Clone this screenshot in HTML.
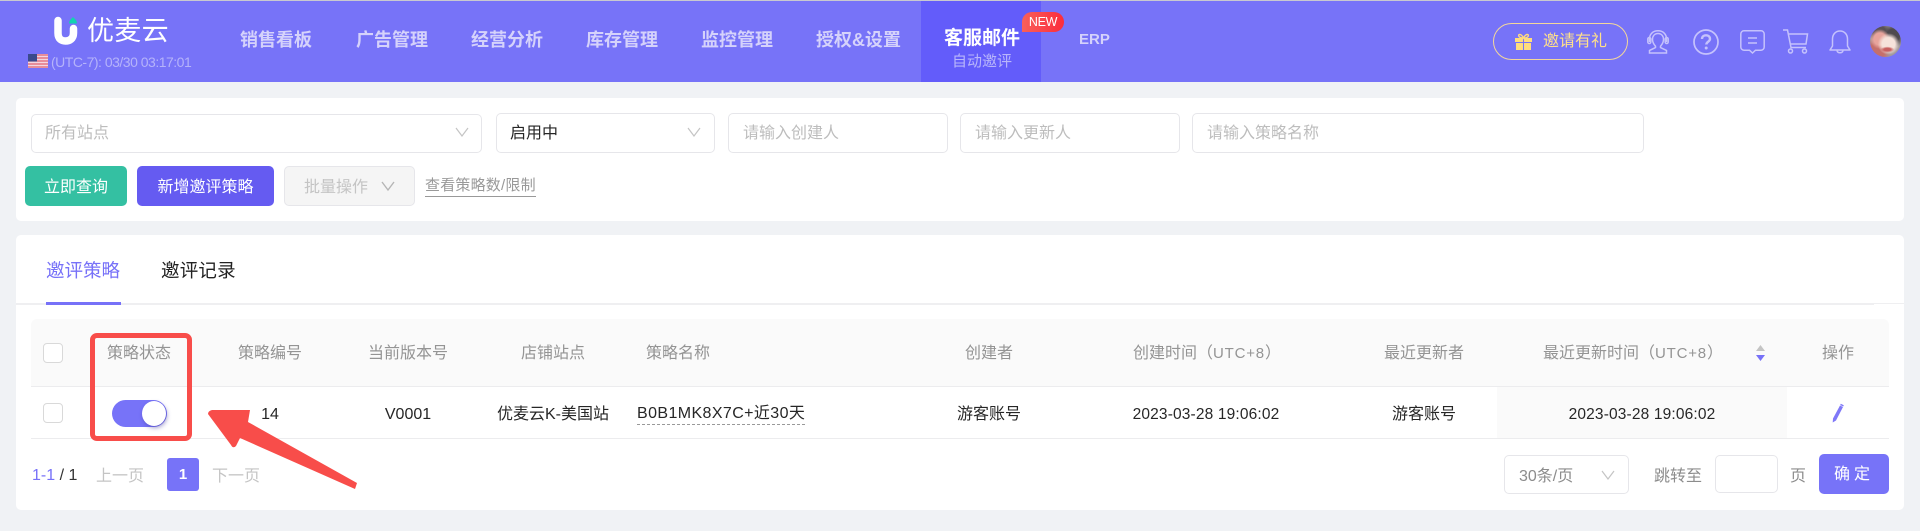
<!DOCTYPE html>
<html lang="zh-CN"><head><meta charset="utf-8"><title>优麦云</title>
<style>
html,body{margin:0;padding:0}
body{width:1920px;height:531px;overflow:hidden;position:relative;background:#f0f2f5;font-family:"Liberation Sans","Noto Sans CJK SC",sans-serif;font-size:16px;color:#222}
.a,.c{position:absolute;white-space:nowrap}
.c{transform:translateX(-50%)}
.box{position:absolute;box-sizing:border-box;background:#fff;border:1px solid #e6e6ea;border-radius:5px}
.nav{font-size:18px;font-weight:700;color:#d5d2fb;line-height:24px;top:28px}
.ph{font-size:16px;color:#bdbdbd;line-height:24px;top:122px}
.th{font-size:16px;color:#949494;line-height:24px;top:342px}
.td{font-size:16px;color:#262626;line-height:24px;top:403px}
.utc{font-size:15px;letter-spacing:.8px}
.cb{position:absolute;box-sizing:border-box;width:20px;height:20px;left:43px;border:1px solid #d9d9d9;border-radius:4px;background:#fff}
svg{position:absolute;overflow:visible}
</style></head><body>
<div class="a" style="left:0;top:0;width:1920px;height:1px;background:#c9c9d0"></div>
<div class="a" style="left:0;top:1px;width:1920px;height:81px;background:#7773f8"></div>
<div class="a" style="left:921px;top:1px;width:120px;height:81px;background:#635cfa"></div>

<svg style="left:54px;top:16px" width="24" height="29" viewBox="0 0 24 29"><path d="M4 4.500V17C4 23 7.500 25 11.500 25S19.500 23 19.500 17V12.500" fill="none" stroke="#fff" stroke-width="7.500" stroke-linecap="round"/><path d="M15 7.500C15 4.500 17 3 19 1 21 3 23 4.500 23 7.500Z" fill="#13d3b0"/></svg>
<div class="a" style="left:87px;top:14px;font-size:27px;line-height:34px;color:#fff;letter-spacing:.3px">优麦云</div>
<svg style="left:28px;top:54px" width="20" height="14" viewBox="0 0 20 14"><rect width="20" height="14" fill="#f3d6e0"/><path d="M0 1h20M0 4h20M0 7h20M0 10h20M0 13h20" stroke="#e0626f" stroke-width="1.2"/><rect width="9" height="7.500" fill="#3a4a8c"/></svg>
<div class="a" style="left:51px;top:53px;font-size:14px;line-height:18px;color:#b5b3fa;letter-spacing:-.5px">(UTC-7): 03/30 03:17:01</div>

<div class="a nav" style="left:240px">销售看板</div>
<div class="a nav" style="left:356px">广告管理</div>
<div class="a nav" style="left:471px">经营分析</div>
<div class="a nav" style="left:586px">库存管理</div>
<div class="a nav" style="left:701px">监控管理</div>
<div class="a nav" style="left:816px">授权&amp;设置</div>
<div class="a nav" style="left:944px;color:#fff;font-size:19px;top:27px">客服邮件</div>
<div class="a" style="left:952px;top:52px;font-size:15px;line-height:20px;color:#b9b6fb">自动邀评</div>
<div class="a" style="left:1022px;top:12px;width:42px;height:20px;background:linear-gradient(90deg,#f9605a,#fb2c3c);border-radius:10px 10px 10px 0;color:#fff;font-size:12.500px;line-height:20px;text-align:center;letter-spacing:-.3px">NEW</div>
<div class="a nav" style="left:1079px;font-size:15px;top:28px">ERP</div>

<div class="a" style="left:1493px;top:23px;width:135px;height:37px;box-sizing:border-box;border:1px solid #f3d79a;border-radius:19px"></div>
<svg style="left:1515px;top:33px" width="17" height="18" viewBox="0 0 17 18"><path d="M0 5h8v4H0zM9 5h8v4H9zM1 10h7v7H1zM9 10h7v7H9z" fill="#ffdc7d"/><path d="M8.500 5C6 0 2.500 1 4 3.500 5 5 8 5 8.500 5 9 5 12 5 13 3.500 14.500 1 11 0 8.500 5Z" fill="none" stroke="#ffdc7d" stroke-width="1.400"/></svg>
<div class="a" style="left:1543px;top:30px;font-size:16px;line-height:24px;color:#ffe08a">邀请有礼</div>

<svg style="left:1647px;top:30px" width="22" height="24" viewBox="0 0 22 24" fill="none" stroke="#c5c2fc" stroke-width="1.500"><path d="M2.500 12V9C2.500 4 6 .8 11 .8S19.500 4 19.500 9V12"/><rect x=".8" y="7.500" width="3" height="6" rx="1.500"/><rect x="18.200" y="7.500" width="3" height="6" rx="1.500"/><path d="M11 3.500C7.500 3.500 5.500 6 5.500 9.500S7.500 15 8.500 16.200V17.500L2.500 20.500V23H19.500V20.500L13.500 17.500V16.200C14.500 15 16.500 13 16.500 9.500S14.500 3.500 11 3.500Z"/></svg>
<svg style="left:1693px;top:29px" width="26" height="26" viewBox="0 0 26 26" fill="none" stroke="#c5c2fc"><circle cx="13" cy="13" r="12" stroke-width="1.700"/><path d="M9 10C9 7.500 11 6.300 13 6.300S17 7.500 17 10C17 12.500 13.300 12.800 13.300 15.500" stroke-width="2.400"/><circle cx="13.200" cy="19" r="1.500" fill="#c5c2fc" stroke="none"/></svg>
<svg style="left:1740px;top:30px" width="25" height="24" viewBox="0 0 25 24" fill="none" stroke="#c5c2fc" stroke-width="1.500"><path d="M4 .8H21A3.200 3.200 0 0 1 24.200 4V17A3.200 3.200 0 0 1 21 20.200H15.500L12.500 23 9.500 20.200H4A3.200 3.200 0 0 1 .8 17V4A3.200 3.200 0 0 1 4 .8Z"/><path d="M8 8H17M8 13H17"/></svg>
<svg style="left:1783px;top:29px" width="26" height="25" viewBox="0 0 26 25" fill="none" stroke="#c5c2fc" stroke-width="1.500"><path d="M0 1H4.500L8 18.500H23"/><path d="M5 5H24.500L23 15H7"/><circle cx="7.500" cy="22" r="2"/><circle cx="21.500" cy="22" r="2"/></svg>
<svg style="left:1829px;top:30px" width="22" height="24" viewBox="0 0 22 24" fill="none" stroke="#c5c2fc" stroke-width="1.500"><path d="M1 20H21L18.500 16V9C18.500 4.500 15.500 1 11 1S3.500 4.500 3.500 9V16Z" stroke-linejoin="round"/><path d="M8 20.500C8.500 23.500 13.500 23.500 14 20.500"/></svg>
<div class="a" style="left:1870px;top:26px;width:31px;height:31px;border-radius:50%;background:radial-gradient(ellipse 7px 3px at 56% 76%,#c8605f 0 50%,transparent 100%),radial-gradient(circle at 60% 58%,#f6e2da 0 25%,transparent 42%),radial-gradient(circle at 32% 42%,#e8a49c 0 22%,transparent 36%),radial-gradient(circle at 20% 84%,#c56f6b 0 22%,transparent 40%),radial-gradient(circle at 75% 30%,#4f4a4e 0 20%,transparent 38%),radial-gradient(circle at 30% 18%,#5a5256 0 18%,transparent 32%),#a39a9b"></div>

<div class="a" style="left:16px;top:98px;width:1888px;height:123px;background:#fff;border-radius:5px"></div>
<div class="box" style="left:31px;top:114px;width:451px;height:39px"></div>
<div class="a ph" style="left:45px">所有站点</div>
<svg style="left:455px;top:127px" width="14" height="10" viewBox="0 0 14 10"><path d="M1 1L7 9 13 1" fill="none" stroke="#c4c4c4" stroke-width="1.200"/></svg>
<div class="box" style="left:496px;top:113px;width:219px;height:40px"></div>
<div class="a" style="left:510px;top:122px;line-height:24px;color:#262626">启用中</div>
<svg style="left:687px;top:127px" width="14" height="10" viewBox="0 0 14 10"><path d="M1 1L7 9 13 1" fill="none" stroke="#c4c4c4" stroke-width="1.200"/></svg>
<div class="box" style="left:728px;top:113px;width:220px;height:40px"></div>
<div class="a ph" style="left:743px">请输入创建人</div>
<div class="box" style="left:960px;top:113px;width:220px;height:40px"></div>
<div class="a ph" style="left:975px">请输入更新人</div>
<div class="box" style="left:1192px;top:113px;width:452px;height:40px"></div>
<div class="a ph" style="left:1207px">请输入策略名称</div>

<div class="a" style="left:25px;top:166px;width:102px;height:40px;background:#34c0a2;border-radius:5px;color:#fff;text-align:center;line-height:44px">立即查询</div>
<div class="a" style="left:137px;top:166px;width:137px;height:40px;background:#655bf1;border-radius:5px;color:#fff;text-align:center;line-height:44px">新增邀评策略</div>
<div class="box" style="left:284px;top:166px;width:131px;height:40px;background:#f5f5f5"></div>
<div class="a" style="left:304px;top:176px;line-height:24px;color:#c4c4c4">批量操作</div>
<svg style="left:381px;top:181px" width="14" height="10" viewBox="0 0 14 10"><path d="M1 1L7 9 13 1" fill="none" stroke="#b5b5b5" stroke-width="1.400"/></svg>
<div class="a" style="left:425px;top:175px;font-size:15px;line-height:21px;color:#999;border-bottom:1px solid #999;letter-spacing:.2px">查看策略数/限制</div>

<div class="a" style="left:16px;top:235px;width:1888px;height:275px;background:#fff;border-radius:5px"></div>
<div class="a" style="left:46px;top:258px;font-size:18.500px;line-height:26px;color:#7771f8">邀评策略</div>
<div class="a" style="left:161px;top:258px;font-size:18.500px;line-height:26px;letter-spacing:.2px;color:#222">邀评记录</div>
<div class="a" style="left:16px;top:303px;width:1888px;height:1px;background:#efeff1"></div>
<div class="a" style="left:16px;top:303px;width:1858px;height:2px;background:#efeff1"></div>
<div class="a" style="left:46px;top:302px;width:75px;height:3px;background:#7771f8"></div>

<div class="a" style="left:31px;top:319px;width:1858px;height:67px;background:#fafafa;border-radius:6px 6px 0 0;border-bottom:1px solid #ececee;box-sizing:content-box"></div>
<div class="a" style="left:31px;top:438px;width:1858px;height:1px;background:#ececee"></div>
<div class="a" style="left:1497px;top:387px;width:290px;height:51px;background:#fafafa"></div>

<div class="cb" style="top:343px"></div>
<div class="cb" style="top:403px"></div>
<div class="c th" style="left:139px">策略状态</div>
<div class="c th" style="left:270px">策略编号</div>
<div class="c th" style="left:408px">当前版本号</div>
<div class="c th" style="left:553px">店铺站点</div>
<div class="a th" style="left:646px">策略名称</div>
<div class="c th" style="left:989px">创建者</div>
<div class="a th" style="left:1133px">创建时间（<span class="utc">UTC+8</span>）</div>
<div class="c th" style="left:1424px">最近更新者</div>
<div class="a th" style="left:1543px">最近更新时间（<span class="utc">UTC+8</span>）</div>
<svg style="left:1756px;top:345px" width="9" height="16" viewBox="0 0 9 16"><path d="M4.500 0L9 6H0Z" fill="#c4c4c4"/><path d="M4.500 16L9 10H0Z" fill="#7771f8"/></svg>
<div class="c th" style="left:1838px">操作</div>

<div class="a" style="left:112px;top:400px;width:55px;height:27px;background:#7773f8;border-radius:14px"></div>
<div class="a" style="left:142px;top:401px;width:24px;height:25px;background:#fff;border-radius:50%;box-shadow:1px 2px 4px rgba(60,50,150,.45)"></div>
<div class="c td" style="left:270px">14</div>
<div class="c td" style="left:408px">V0001</div>
<div class="c td" style="left:553px">优麦云K-美国站</div>
<div class="a td" style="left:637px;line-height:21px;top:403px;border-bottom:1px dashed #999;letter-spacing:.4px">B0B1MK8X7C+近30天</div>
<div class="c td" style="left:989px">游客账号</div>
<div class="c td" style="left:1206px;font-size:15.500px;letter-spacing:.15px">2023-03-28 19:06:02</div>
<div class="c td" style="left:1424px">游客账号</div>
<div class="c td" style="left:1642px;font-size:15.500px;letter-spacing:.15px">2023-03-28 19:06:02</div>
<svg style="left:1832px;top:403px" width="12" height="20" viewBox="0 0 12 20"><path d="M8 2.500L11 4 4 17.500 .7 19.500 1 15.500Z" fill="#7f78f8"/><path d="M8.800 .8L11.800 2.300 11.200 3.500 8.200 2Z" fill="#7f78f8"/></svg>

<div class="a" style="left:90px;top:333px;width:102px;height:108px;box-sizing:border-box;border:5px solid #f84d4a;border-radius:7px"></div>
<svg style="left:0;top:0" width="1920" height="531" viewBox="0 0 1920 531"><path d="M208 414Q208 411 212 410L250 410 248 422 357 483 355 489 240 438 236 446Q233 449 231 445Z" fill="#f84d4a"/></svg>

<div class="a" style="left:32px;top:464px;font-size:16px;line-height:24px;color:#333"><span style="color:#7771f8">1-1</span> / 1</div>
<div class="a" style="left:96px;top:465px;line-height:24px;color:#c4c4c4">上一页</div>
<div class="a" style="left:167px;top:458px;width:32px;height:33px;background:#7773f8;border-radius:3px;color:#fff;font-weight:700;text-align:center;line-height:33px;font-size:15px">1</div>
<div class="a" style="left:212px;top:465px;line-height:24px;color:#c4c4c4">下一页</div>

<div class="box" style="left:1504px;top:455px;width:125px;height:39px"></div>
<div class="a" style="left:1519px;top:465px;line-height:24px;color:#8c8c8c">30条/页</div>
<svg style="left:1601px;top:470px" width="14" height="10" viewBox="0 0 14 10"><path d="M1 1L7 9 13 1" fill="none" stroke="#c4c4c4" stroke-width="1.200"/></svg>
<div class="a" style="left:1654px;top:465px;line-height:24px;color:#8c8c8c">跳转至</div>
<div class="box" style="left:1715px;top:455px;width:63px;height:38px"></div>
<div class="a" style="left:1790px;top:465px;line-height:24px;color:#8c8c8c">页</div>
<div class="a" style="left:1819px;top:454px;width:70px;height:40px;background:#7773f8;border-radius:5px;color:#fff;text-align:center;line-height:42px;letter-spacing:4px;font-size:16px">确定</div>
</body></html>
